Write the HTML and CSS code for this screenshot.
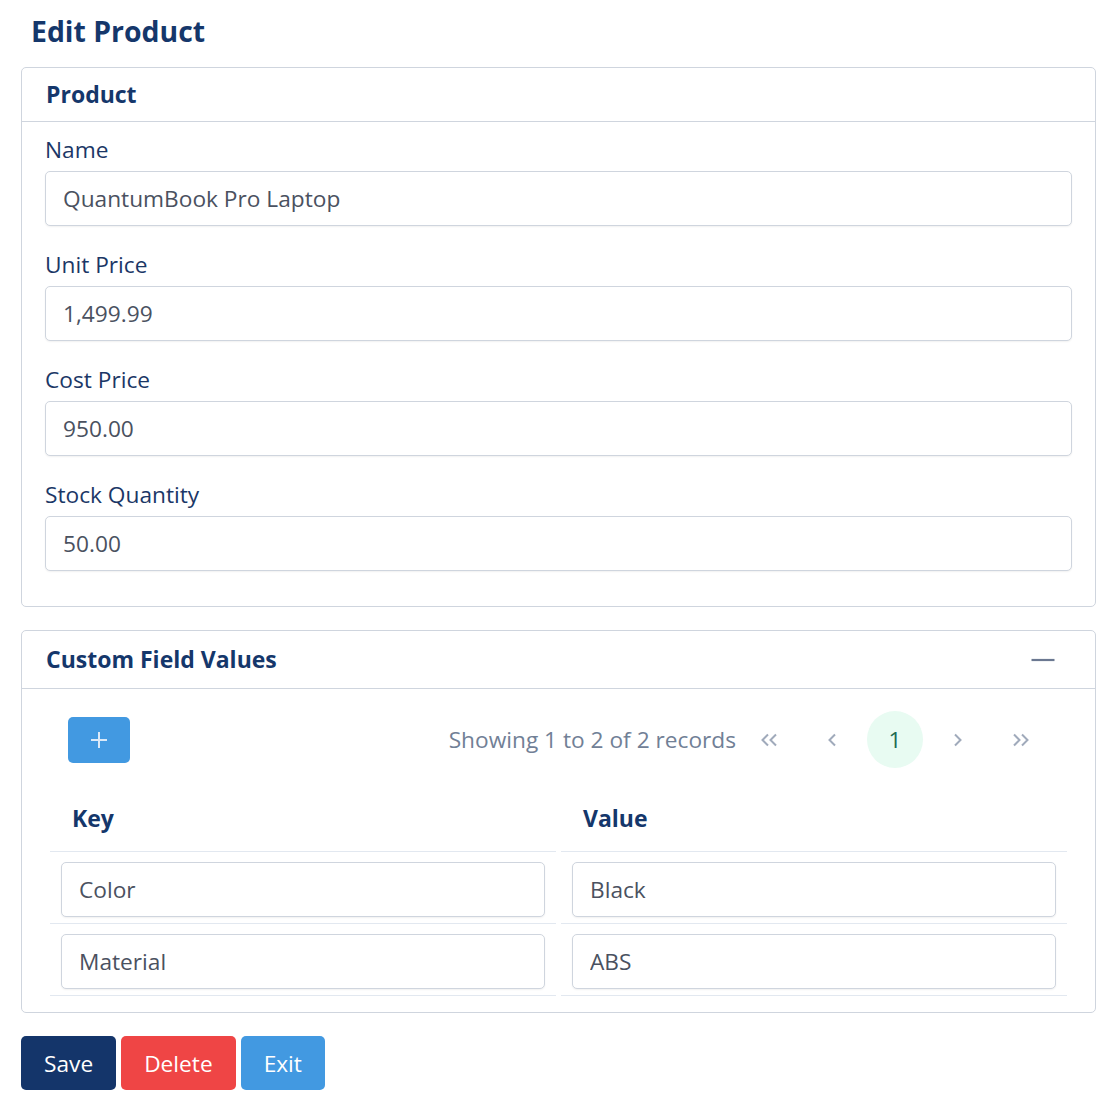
FILE: index.html
```html
<!DOCTYPE html>
<html>
  <head>
    <meta charset="UTF-8" />
    <title>Edit Product</title>
    <link rel="stylesheet" href="styles.css">
  </head>
  <body>
    <h1 class="page-title">Edit Product</h1>

    <section class="card">
      <div class="card-header">
        <h2 class="card-title">Product</h2>
      </div>
      <div class="card-body fields">
        <div class="field">
          <label class="field-label">Name</label>
          <input class="field-input" type="text" value="QuantumBook Pro Laptop" />
        </div>
        <div class="field">
          <label class="field-label">Unit Price</label>
          <input class="field-input" type="text" value="1,499.99" />
        </div>
        <div class="field">
          <label class="field-label">Cost Price</label>
          <input class="field-input" type="text" value="950.00" />
        </div>
        <div class="field">
          <label class="field-label">Stock Quantity</label>
          <input class="field-input" type="text" value="50.00" />
        </div>
      </div>
    </section>

    <section class="card">
      <div class="card-header">
        <h2 class="card-title">Custom Field Values</h2>
        <button class="collapse-btn" title="Collapse">
          <svg width="24" height="24" viewBox="0 0 24 24"><path d="M0.5 12h23" stroke="#6b7891" stroke-width="2.2" /></svg>
        </button>
      </div>
      <div class="card-body table-body">
        <div class="toolbar">
          <button class="add-btn" title="Add">
            <svg width="16" height="16" viewBox="0 0 16 16"><path d="M8 0v16M0 8h16" stroke="#dbe9f8" stroke-width="2" /></svg>
          </button>
          <div class="pager">
            <span class="pager-info">Showing 1 to 2 of 2 records</span>
            <button class="page-btn">
              <svg width="18" height="14" viewBox="0 0 18 14"><path d="M8 1.5L2.5 7 8 12.5M16 1.5L10.5 7 16 12.5" fill="none" stroke="#a0aabb" stroke-width="2" /></svg>
            </button>
            <button class="page-btn">
              <svg width="10" height="14" viewBox="0 0 10 14"><path d="M8 1.5L2.5 7 8 12.5" fill="none" stroke="#a0aabb" stroke-width="2" /></svg>
            </button>
            <button class="page-btn current">1</button>
            <button class="page-btn">
              <svg width="10" height="14" viewBox="0 0 10 14"><path d="M2 1.5L7.5 7 2 12.5" fill="none" stroke="#a0aabb" stroke-width="2" /></svg>
            </button>
            <button class="page-btn">
              <svg width="18" height="14" viewBox="0 0 18 14"><path d="M2 1.5L7.5 7 2 12.5M10 1.5L15.5 7 10 12.5" fill="none" stroke="#a0aabb" stroke-width="2" /></svg>
            </button>
          </div>
        </div>

        <table class="kv-table">
          <thead>
            <tr>
              <th>Key</th>
              <th>Value</th>
            </tr>
          </thead>
          <tbody>
            <tr>
              <td><input class="field-input" type="text" value="Color" /></td>
              <td><input class="field-input" type="text" value="Black" /></td>
            </tr>
            <tr>
              <td><input class="field-input" type="text" value="Material" /></td>
              <td><input class="field-input" type="text" value="ABS" /></td>
            </tr>
          </tbody>
        </table>
      </div>
    </section>

    <div class="actions">
      <button class="btn btn-save">Save</button>
      <button class="btn btn-delete">Delete</button>
      <button class="btn btn-exit">Exit</button>
    </div>
  </body>
</html>
```

FILE: styles.css
```css
body, html {
  margin: 0;
  padding: 0;
  font-family: "Open Sans", "Noto Sans", sans-serif;
  color: #1b3766;
  background: #fff;
}

body {
  padding: 0 20px 0 21px;
}

.page-title {
  margin: 0;
  padding: 12px 0 17px 10px;
  font-size: 28.4px;
  line-height: 38px;
  font-weight: bold;
  color: #15376b;
}

.card {
  border: 1px solid #cfd5de;
  border-radius: 5px;
  margin-bottom: 23px;
}

.card-header {
  display: flex;
  align-items: center;
  justify-content: space-between;
  padding: 12px 24px;
  border-bottom: 1px solid #cfd5de;
}

.card-title {
  margin: 0;
  font-size: 23px;
  line-height: 29px;
  font-weight: bold;
  color: #15376b;
}

.collapse-btn {
  display: flex;
  align-items: center;
  height: 33px;
  padding: 0;
  margin-right: 16px;
  border: none;
  background: none;
}

.card-body {
  padding: 13px 23px 35px;
}

.field {
  display: flex;
  flex-direction: column;
  margin-bottom: 24px;
}

.field:last-child {
  margin-bottom: 0;
}

.field-label {
  font-size: 22.7px;
  line-height: 30px;
  margin-bottom: 6px;
  color: #1b3766;
}

.field-input {
  box-sizing: border-box;
  width: 100%;
  height: 55px;
  padding: 0 17px;
  font-family: inherit;
  font-size: 22.7px;
  color: #4a5160;
  border: 1px solid #cfd5de;
  border-radius: 5px;
  box-shadow: 0 1px 2px rgba(0, 0, 0, 0.06);
  outline: none;
}

.table-body {
  padding: 22px 23px 16px;
}

.toolbar {
  display: flex;
  align-items: center;
  justify-content: space-between;
  padding: 0 23px;
  margin-bottom: 20px;
}

.add-btn {
  display: flex;
  align-items: center;
  justify-content: center;
  width: 62px;
  height: 46px;
  padding: 0;
  border: none;
  border-radius: 5px;
  background: #4299e1;
}

.pager {
  display: flex;
  align-items: center;
  gap: 7px;
}

.pager-info {
  font-size: 22.7px;
  color: #718096;
  margin-right: -2px;
}

.page-btn {
  display: flex;
  align-items: center;
  justify-content: center;
  width: 56px;
  height: 57px;
  padding: 0;
  border: none;
  border-radius: 50%;
  background: none;
  font-family: inherit;
  font-size: 22.7px;
  color: #1f6b52;
}

.page-btn.current {
  background: #e8fbf2;
}

.kv-table {
  width: 100%;
  border-collapse: separate;
  border-spacing: 5px 0;
  table-layout: fixed;
}

.kv-table th {
  text-align: left;
  font-size: 23px;
  line-height: 30px;
  font-weight: bold;
  color: #15376b;
  padding: 15px 22px 18px;
  border-bottom: 1px solid #e2e8f0;
}

.kv-table td {
  padding: 10px 11px 6px;
  border-bottom: 1px solid #e2e8f0;
}

.actions {
  display: flex;
  gap: 5px;
}

.btn {
  height: 54px;
  padding: 0 23px;
  border: none;
  border-radius: 5px;
  font-family: inherit;
  font-size: 22.7px;
  color: #fff;
}

.btn-save {
  background: #14356a;
}

.btn-delete {
  background: #ef4545;
}

.btn-exit {
  background: #4299e1;
}
```
